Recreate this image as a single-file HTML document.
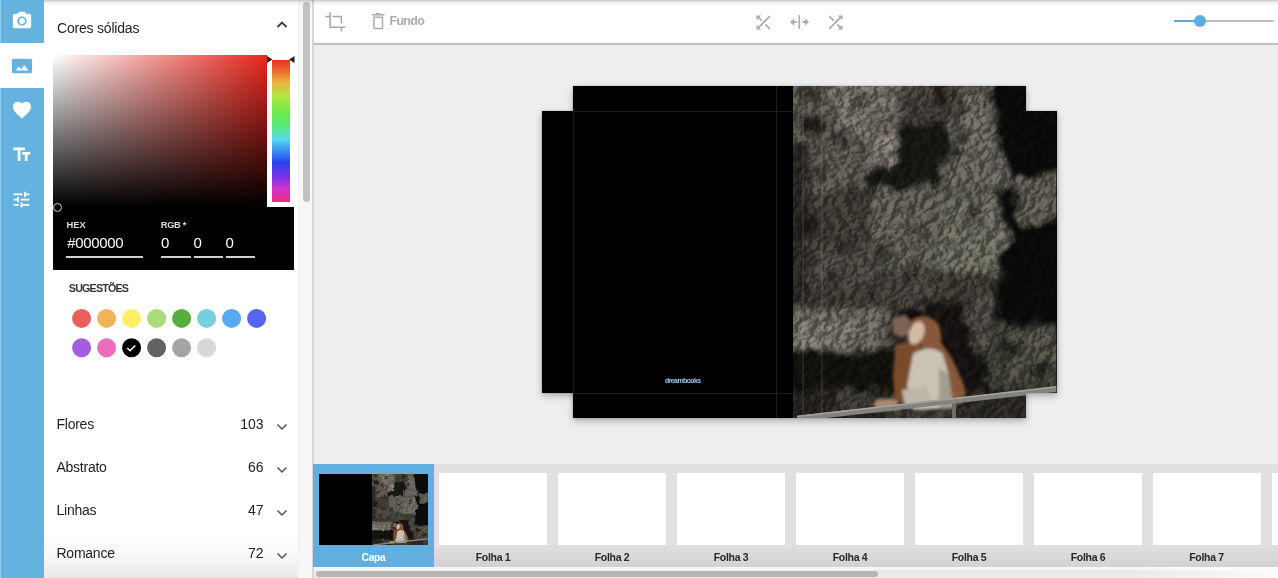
<!DOCTYPE html>
<html><head><meta charset="utf-8">
<style>
*{margin:0;padding:0;box-sizing:border-box}
html,body{width:1278px;height:578px;overflow:hidden;background:#fff;font-family:"Liberation Sans",sans-serif}
.a{position:absolute}
.t{position:absolute;white-space:nowrap;line-height:1}
svg{display:block}
</style></head><body>
<!-- SIDEBAR -->
<div class="a" style="left:0;top:0;width:44px;height:578px;background:#66b2de"></div>
<div class="a" style="left:0;top:0;width:1px;height:578px;background:#8ccdf1"></div>
<div class="a" style="left:0;top:43px;width:44px;height:45px;background:#fff"></div>
<svg class="a" style="left:10.6px;top:10.2px" width="22" height="22" viewBox="0 0 24 24"><path fill="#fff" d="M9 2L7.17 4H4c-1.1 0-2 .9-2 2v12c0 1.1.9 2 2 2h16c1.1 0 2-.9 2-2V6c0-1.1-.9-2-2-2h-3.17L15 2H9zm3 15c-2.76 0-5-2.24-5-5s2.24-5 5-5 5 2.24 5 5-2.24 5-5 5z"/><circle cx="12" cy="12" r="3.2" fill="#fff"/></svg>
<svg class="a" style="left:11.1px;top:55px" width="22" height="22" viewBox="0 0 24 24"><path fill="#66b2de" d="M23 18V6c0-1.1-.9-2-2-2H3c-1.1 0-2 .9-2 2v12c0 1.1.9 2 2 2h18c1.1 0 2-.9 2-2zM8.5 12.5l2.5 3.01L14.5 11l4.5 6H5l3.5-4.5z"/></svg>
<svg class="a" style="left:10.6px;top:99.3px" width="22" height="22" viewBox="0 0 24 24"><path fill="#fff" d="M12 21.35l-1.45-1.32C5.4 15.36 2 12.28 2 8.5 2 5.42 4.42 3 7.5 3c1.74 0 3.41.81 4.5 2.09C13.09 3.81 14.76 3 16.5 3 19.58 3 22 5.42 22 8.5c0 3.780-3.4 6.86-8.55 11.54L12 21.35z"/></svg>
<svg class="a" style="left:10.8px;top:144px" width="21.5" height="21.5" viewBox="0 0 24 24"><path fill="#fff" d="M2.5 4v3h5v12h3V7h5V4h-13zm19 5h-9v3h3v7h3v-7h3V9z"/></svg>
<svg class="a" style="left:11px;top:188.5px" width="21" height="21" viewBox="0 0 24 24"><path fill="#fff" d="M3 17v2h6v-2H3zM3 5v2h10V5H3zm10 16v-2h8v-2h-8v-2h-2v6h2zM7 9v2H3v2h4v2h2V9H7zm14 4v-2H11v2h10zm-6-4h2V7h4V5h-4V3h-2v6z"/></svg>

<!-- PANEL -->
<div class="t" style="left:57px;top:21px;font-size:14px;letter-spacing:-0.2px;color:#222">Cores sólidas</div>
<svg class="a" style="left:276px;top:18px" width="12" height="12" viewBox="0 0 12 12"><path d="M1.5 9L6 4.5 10.5 9" fill="none" stroke="#3a3a3a" stroke-width="1.9"/></svg>

<div class="a" style="left:53px;top:55px;width:241px;height:215px;background:#000"></div>
<div class="a" style="left:53px;top:55px;width:214px;height:152px;background:linear-gradient(to top,#000,rgba(0,0,0,0)),linear-gradient(to right,#fff,#e8261c)"></div>
<div class="a" style="left:267px;top:55px;width:27px;height:152px;background:#fff"></div>
<div class="a" style="left:272px;top:60px;width:17.5px;height:142px;background:linear-gradient(to bottom,#e6302a 0%,#ee6a2a 8%,#e8b840 16%,#b0e844 26%,#66ea4c 38%,#5ae88c 48%,#56d8ee 56%,#3a8ef0 64%,#2a44f0 72%,#7432e6 82%,#cc34d2 90%,#ee2c78 100%)"></div>
<svg class="a" style="left:266px;top:55px" width="30" height="10" viewBox="0 0 30 10"><path d="M1 1l5.5 3.5L1 8z" fill="#222"/><path d="M28.5 1L23 4.5 28.5 8z" fill="#222"/></svg>
<div class="a" style="left:52.5px;top:202.5px;width:9px;height:9px;border:1.5px solid #ccc;border-radius:50%"></div>
<div class="t" style="left:66.5px;top:221px;font-size:9.3px;font-weight:bold;color:#ddd">HEX</div>
<div class="t" style="left:67.3px;top:235px;font-size:15px;letter-spacing:-0.35px;color:#fff">#000000</div>
<div class="a" style="left:66.2px;top:256px;width:77.3px;height:1.6px;background:#d0d0d0"></div>
<div class="t" style="left:160.8px;top:221px;font-size:9.3px;font-weight:bold;letter-spacing:-0.35px;color:#ddd">RGB *</div>
<div class="t" style="left:161px;top:235px;font-size:15px;color:#fff">0</div>
<div class="t" style="left:193.5px;top:235px;font-size:15px;color:#fff">0</div>
<div class="t" style="left:225.5px;top:235px;font-size:15px;color:#fff">0</div>
<div class="a" style="left:161px;top:256px;width:29.5px;height:1.6px;background:#d0d0d0"></div>
<div class="a" style="left:193.5px;top:256px;width:29px;height:1.6px;background:#d0d0d0"></div>
<div class="a" style="left:225.5px;top:256px;width:29px;height:1.6px;background:#d0d0d0"></div>

<div class="t" style="left:68.8px;top:283px;font-size:10.7px;font-weight:bold;letter-spacing:-0.8px;color:#333">SUGESTÕES</div>
<svg class="a" style="left:60px;top:300px" width="210" height="70">
<g>
<circle cx="21.6" cy="18.4" r="9.5" fill="#e8605c"/>
<circle cx="46.6" cy="18.4" r="9.5" fill="#f0b356"/>
<circle cx="71.6" cy="18.4" r="9.5" fill="#fdf068"/>
<circle cx="96.6" cy="18.4" r="9.5" fill="#a8dc78"/>
<circle cx="121.6" cy="18.4" r="9.5" fill="#58ad3e"/>
<circle cx="146.6" cy="18.4" r="9.5" fill="#74cfe0"/>
<circle cx="171.6" cy="18.4" r="9.5" fill="#54a9f0"/>
<circle cx="196.6" cy="18.4" r="9.5" fill="#5565ef"/>
<circle cx="21.6" cy="47.8" r="9.5" fill="#a35ee0"/>
<circle cx="46.6" cy="47.8" r="9.5" fill="#ea6cbb"/>
<circle cx="71.6" cy="47.8" r="9.5" fill="#000"/>
<circle cx="96.6" cy="47.8" r="9.5" fill="#626262"/>
<circle cx="121.6" cy="47.8" r="9.5" fill="#a4a4a4"/>
<circle cx="146.6" cy="47.8" r="9.5" fill="#d8d8d8"/>
<path d="M67.3 48l2.8 2.8 5.2-5.4" fill="none" stroke="#fff" stroke-width="1.5"/>
</g></svg>

<div class="t" style="left:56.5px;top:417px;font-size:14px;letter-spacing:-0.25px;color:#222">Flores</div>
<div class="t" style="left:56.5px;top:460px;font-size:14px;letter-spacing:-0.25px;color:#222">Abstrato</div>
<div class="t" style="left:56.5px;top:503px;font-size:14px;letter-spacing:-0.25px;color:#222">Linhas</div>
<div class="t" style="left:56.5px;top:546px;font-size:14px;letter-spacing:-0.25px;color:#222">Romance</div>
<div class="t" style="left:200px;width:63.5px;text-align:right;top:417px;font-size:14px;color:#222">103</div>
<div class="t" style="left:200px;width:63.5px;text-align:right;top:460px;font-size:14px;color:#222">66</div>
<div class="t" style="left:200px;width:63.5px;text-align:right;top:503px;font-size:14px;color:#222">47</div>
<div class="t" style="left:200px;width:63.5px;text-align:right;top:546px;font-size:14px;color:#222">72</div>
<svg class="a" style="left:276px;top:420px" width="12" height="140" viewBox="0 0 12 140"><g fill="none" stroke="#555" stroke-width="1.5"><path d="M1.5 4.5L6 9 10.5 4.5"/><path d="M1.5 47.5L6 52 10.5 47.5"/><path d="M1.5 90.5L6 95 10.5 90.5"/><path d="M1.5 133.5L6 138 10.5 133.5"/></g></svg>

<div class="a" style="left:44px;top:530px;width:254px;height:48px;background:linear-gradient(rgba(0,0,0,0),rgba(0,0,0,.025) 50%,rgba(0,0,0,.09))"></div>
<!-- panel scrollbar -->
<div class="a" style="left:298px;top:0;width:15px;height:578px;background:#f7f7f7;border-left:1px solid #f0f0f0"></div>
<div class="a" style="left:302.5px;top:2px;width:7px;height:199.5px;background:#c2c2c2;border-radius:3.5px"></div>
<div class="a" style="left:312px;top:0;width:2px;height:578px;background:#d6d6d6"></div>

<!-- MAIN -->
<div class="a" style="left:314px;top:0;width:964px;height:43px;background:#fff"></div>
<div class="a" style="left:314px;top:43px;width:964px;height:2px;background:#bdbdbd"></div>
<div class="a" style="left:314px;top:45px;width:964px;height:419px;background:#eeeeee"></div>
<div class="a" style="left:44px;top:0;width:1234px;height:7px;background:linear-gradient(rgba(0,0,0,.23) 0px,rgba(0,0,0,.11) 1.5px,rgba(0,0,0,.05) 3px,rgba(0,0,0,.015) 5px,rgba(0,0,0,0) 7px)"></div>

<svg class="a" style="left:320px;top:8px" width="30" height="28" viewBox="320 8 30 28"><g fill="none" stroke="#a4a4a4" stroke-width="1.5"><path d="M325.4 16.4H330.1M330.1 12.1V27.2H345.3M332.7 16.4H341.4V23.4M341.4 27.2V31.6"/></g></svg>
<svg class="a" style="left:368px;top:8px" width="20" height="26" viewBox="368 8 20 26"><g fill="none" stroke="#acacac" stroke-width="1.5"><path d="M372 14.8H384.4"/><path d="M376 13.6H380.5"/><path d="M373.9 17.2V27.7Q373.9 28.6 374.8 28.6H381.6Q382.5 28.6 382.5 27.7V17.2z"/></g></svg>
<div class="t" style="left:389.5px;top:14.5px;font-size:12.5px;font-weight:bold;letter-spacing:-0.7px;color:#acacac">Fundo</div>

<svg class="a" style="left:753px;top:11.5px" width="21" height="21" viewBox="0 0 24 24"><path fill="#acacac" transform="rotate(180 12 12)" d="M10.59 9.17L5.41 4 4 5.41l5.17 5.17 1.42-1.41zM14.5 4l2.04 2.04L4 18.59 5.41 20 17.96 7.46 20 9.5V4h-5.5zm.33 9.41l-1.41 1.41 3.13 3.13L14.5 20H20v-5.5l-2.04 2.04-3.13-3.13z"/></svg>
<svg class="a" style="left:789px;top:14px" width="21" height="16" viewBox="0 0 21 16"><g fill="#acacac"><rect x="9.5" y="1" width="1.6" height="14"/><path d="M1 8l4-3.8v2.8h2.6v2H5v2.8z"/><path d="M20 8l-4-3.8v2.8h-2.6v2H16v2.8z"/></g></svg>
<svg class="a" style="left:824.5px;top:11.5px" width="21" height="21" viewBox="0 0 24 24"><path fill="#acacac" d="M10.59 9.17L5.41 4 4 5.41l5.17 5.17 1.42-1.41zM14.5 4l2.04 2.04L4 18.59 5.41 20 17.96 7.46 20 9.5V4h-5.5zm.33 9.41l-1.41 1.41 3.13 3.13L14.5 20H20v-5.5l-2.04 2.04-3.13-3.13z"/></svg>

<div class="a" style="left:1174px;top:20px;width:100px;height:2.2px;background:#bdbdbd;border-radius:1px"></div>
<div class="a" style="left:1174px;top:20px;width:26px;height:2.2px;background:#5aa9da;border-radius:1px"></div>
<div class="a" style="left:1193.8px;top:15.1px;width:12px;height:12px;background:#5aaee2;border-radius:50%"></div>

<!-- SPREAD -->
<div class="a" style="left:542px;top:111px;width:514.5px;height:282px;background:#000;box-shadow:0 3px 7px rgba(0,0,0,.28),0 0 2px rgba(0,0,0,.2)"></div>
<div class="a" style="left:572.5px;top:86px;width:453.5px;height:332px;background:#000;box-shadow:0 3px 7px rgba(0,0,0,.28),0 0 2px rgba(0,0,0,.2)"></div>
<div class="a" style="left:542px;top:111px;width:514.5px;height:282px;background:#000"></div>
<svg class="a" style="left:793px;top:86px" width="264" height="332" viewBox="0 0 264 332">
<defs>
<clipPath id="spc"><rect x="0" y="25" width="263.5" height="282"/><rect x="0" y="0" width="233" height="332"/></clipPath>
<filter id="rock" x="0" y="0" width="100%" height="100%"><feTurbulence type="turbulence" baseFrequency="0.075 0.09" numOctaves="4" seed="11" result="n"/><feDiffuseLighting in="n" surfaceScale="6" lighting-color="#fff" result="l"><feDistantLight azimuth="225" elevation="35"/></feDiffuseLighting><feColorMatrix in="n" values="1 0 0 0 0  1 0 0 0 0  1 0 0 0 0  0 0 0 0 1" result="g"/><feComponentTransfer in="g" result="g2"><feFuncR type="table" tableValues="0.05 0.6 0.95 1 1"/><feFuncG type="table" tableValues="0.05 0.6 0.95 1 1"/><feFuncB type="table" tableValues="0.05 0.6 0.95 1 1"/></feComponentTransfer><feComposite in="l" in2="g2" operator="arithmetic" k1="1.2" k2="0" k3="0" k4="0"/><feColorMatrix type="saturate" values="0"/><feComponentTransfer><feFuncR type="linear" slope="0.85" intercept="0.27"/><feFuncG type="linear" slope="0.85" intercept="0.27"/><feFuncB type="linear" slope="0.85" intercept="0.27"/></feComponentTransfer></filter>
<filter id="b2"><feGaussianBlur stdDeviation="1.5"/></filter>
<filter id="b6" x="-10%" y="-10%" width="120%" height="120%"><feTurbulence type="fractalNoise" baseFrequency="0.05" numOctaves="3" seed="5" result="dn"/><feGaussianBlur in="SourceGraphic" stdDeviation="3" result="bl"/><feDisplacementMap in="bl" in2="dn" scale="18" xChannelSelector="R" yChannelSelector="G"/></filter>
<g id="ph">
<g filter="url(#b6)">
<path d="M-10 -10H274V170H-10z" fill="#6c685d"/>
<path d="M-10 166H274V342H-10z" fill="#49463e"/>
<path d="M40 -10H106L104 30 70 50 40 40z" fill="#88847a"/>
<path d="M72 50L106 46 108 86 76 88z" fill="#948e83"/>
<path d="M86 106L134 104 136 136 90 136z" fill="#878174"/>
<path d="M143 10L190 6 188 63 145 63z" fill="#7d7a6f"/>
<path d="M190 40L214 40 216 120 196 166 150 170 150 110z" fill="#78766c"/>
<path d="M6 32L32 30 34 47 8 48z" fill="#28231d"/>
<path d="M-10 55H17V340H-10z" fill="#34302a"/>
<path d="M17 109L72 105 80 168 17 168z" fill="#4d4940"/>
<path d="M112 0L172 0 170 38 112 40z" fill="#4f4b43"/>
<path d="M106 40L150 36 162 60 150 82 144 112 75 115 72 86 104 78z" fill="#1f1b16"/>
<path d="M136 -10H160L156 20 140 22z" fill="#302c25"/>
<path d="M198 -10H274V92L250 92 226 124 206 60z" fill="#0c0a08"/>
<path d="M204 100L226 94 230 140 274 128 274 252 204 252 200 170z" fill="#0f0c0a"/>
<path d="M219 92L274 86V128L230 142z" fill="#6e6b60"/>
<path d="M176 184L205 184 205 252 176 252z" fill="#2c2923"/>
<path d="M80 104L200 100 216 150 205 186 80 186z" fill="#706e64"/>
<path d="M150 120L200 110 212 160 200 186 140 186z" fill="#7d7b6e"/>
<path d="M20 166H90L88 200 20 202z" fill="#59554d"/>
<path d="M80 112H150L148 155 80 158z" fill="#726e64"/>
<path d="M95 186H140L142 215 95 215z" fill="#555149"/>
<path d="M150 186H200L200 215 150 215z" fill="#49463d"/>
<path d="M-10 223H95L92 268 -10 268z" fill="#7b776c"/>
<path d="M5 240L60 238 60 265 5 265z" fill="#908b81"/>
<path d="M-10 264H106V310H-10z" fill="#151311"/>
<path d="M128 215H205L205 310 128 310z" fill="#1a1714"/>
<path d="M175 213L201 211 203 261 178 262z" fill="#5e5c52"/>
<path d="M195 240H274V302H195z" fill="#4d4d43"/>
<path d="M215 250L264 240 264 290 220 296z" fill="#5e5d51"/>
<path d="M-10 304H92V342H-10z" fill="#2e2b25"/>
<path d="M40 304L86 302 86 322 44 324z" fill="#4b483f"/>
<path d="M161 306H240V342H161z" fill="#35322c"/>
<path d="M40 50L56 48 54 64 42 66z" fill="#403c34"/>
<path d="M20 80L36 78 34 94 22 95z" fill="#454038"/>
<path d="M56 98L72 100 68 116 54 112z" fill="#403c34"/>
<path d="M4 130L26 128 24 150 6 150z" fill="#28231d"/>
<path d="M44 150L62 148 60 170 46 170z" fill="#454038"/>
<path d="M84 160L102 158 100 176 86 176z" fill="#403c34"/>
<path d="M28 190L46 188 44 206 30 206z" fill="#454038"/>
<path d="M70 198L88 198 86 216 72 216z" fill="#403c34"/>
<path d="M110 178L126 178 124 196 112 196z" fill="#454038"/>
<path d="M120 138L136 138 134 150 122 150z" fill="#454038"/>
<path d="M160 40L176 38 174 56 162 56z" fill="#454038"/>
<path d="M60 10L76 8 74 24 62 24z" fill="#454038"/>
<path d="M10 0L30 0 28 14 12 14z" fill="#454038"/>
<path d="M176 120L190 118 188 140 178 140z" fill="#454038"/>
<path d="M208 258L230 256 228 270 210 270z" fill="#2c2923"/>
<path d="M238 278L260 276 258 290 240 290z" fill="#2c2923"/>
</g>
<g style="mix-blend-mode:multiply"><g transform="rotate(-30 132 166)"><rect x="-120" y="-100" width="520" height="540" filter="url(#rock)"/></g></g>
<g filter="url(#b2)">

<path d="M103 259L127 256 130 300 124 316 102 316 100 290z" fill="#7a4c2c"/>
<path d="M139 249C150 256 160 272 166 288 172 300 174 308 170 312L150 312 140 290z" fill="#86583a"/>
<ellipse cx="118" cy="230" rx="13" ry="7" fill="#16110d"/>
<path d="M100 233L112 229 117 235 116 247 109 251 100 247z" fill="#7e6454"/>
<path d="M98 244C102 250 108 253 113 250L112 256C106 258 99 254 97 248z" fill="#2e221a"/>
<path d="M116 238C122 229 138 228 145 238 149 246 149 258 145 268L130 270C128 258 126 246 116 238z" fill="#87593b"/>
<ellipse cx="123.5" cy="247" rx="7.5" ry="12" transform="rotate(20 123.5 247)" fill="#d2baa6"/>
<path d="M120 268C128 262 142 260 150 268L160 292 162 322 120 324 114 300z" fill="#c9c3b5"/>
<path d="M146 282L158 290 161 322 146 322z" fill="#a39d90"/>
<path d="M148 262C156 270 164 286 168 300 171 308 172 314 168 318L160 318 156 290z" fill="#86583a"/>
<path d="M109 304L133 300 140 318 112 322z" fill="#bdb7a9"/>
<path d="M81 316C86 312 98 312 105 315L104 324 82 325z" fill="#a88870"/>
</g>
<path d="M161 316V334" stroke="#6e6c66" stroke-width="4"/>
<path d="M4 332.6L264 303" stroke="#84827c" stroke-width="5.5"/>
<path d="M4 330.4L264 300.8" stroke="#a6a49e" stroke-width="1.5"/>
<path d="M10 0V332M29 0V332" stroke="rgba(150,150,150,.28)" stroke-width="1"/>
</g>
</defs>
<g clip-path="url(#spc)"><use href="#ph"/></g>
</svg>
<!-- guides -->
<div class="a" style="left:573px;top:111px;width:1px;height:282px;background:#1a1a1a"></div>
<div class="a" style="left:572.5px;top:111px;width:220.5px;height:1px;background:#1a1a1a"></div>
<div class="a" style="left:572.5px;top:393px;width:220.5px;height:1px;background:#1a1a1a"></div>
<div class="a" style="left:776px;top:86px;width:1px;height:332px;background:#1e1e1e"></div>
<div class="t" style="left:665px;top:376.5px;font-size:7px;font-weight:bold;letter-spacing:-0.6px;color:#9cc6ea">dreambooks</div>

<!-- THUMB STRIP -->
<div class="a" style="left:314px;top:464px;width:964px;height:103px;background:linear-gradient(#e0e0e0 0,#e0e0e0 80px,#d2d2d2 103px)"></div>
<div class="a" style="left:313px;top:464px;width:121px;height:103px;background:#62afdf"></div>
<div class="a" style="left:318.5px;top:473.5px;width:109.5px;height:71px;background:#000"></div>
<svg class="a" style="left:372px;top:473.5px" width="56" height="71" viewBox="0 0 264 332" preserveAspectRatio="none"><use href="#ph"/></svg>
<div class="t" style="left:313px;width:121px;text-align:center;top:552.5px;font-size:10.3px;font-weight:bold;letter-spacing:-0.35px;color:#fff">Capa</div>

<div class="a" style="left:439px;top:473px;width:108px;height:71.5px;background:#fff"></div>
<div class="a" style="left:558px;top:473px;width:108px;height:71.5px;background:#fff"></div>
<div class="a" style="left:677px;top:473px;width:108px;height:71.5px;background:#fff"></div>
<div class="a" style="left:796px;top:473px;width:108px;height:71.5px;background:#fff"></div>
<div class="a" style="left:915px;top:473px;width:108px;height:71.5px;background:#fff"></div>
<div class="a" style="left:1034px;top:473px;width:108px;height:71.5px;background:#fff"></div>
<div class="a" style="left:1152.5px;top:473px;width:108px;height:71.5px;background:#fff"></div>
<div class="a" style="left:1271.5px;top:473px;width:108px;height:71.5px;background:#fff"></div>
<div class="t" style="left:439px;width:108px;text-align:center;top:551.5px;font-size:10.5px;font-weight:bold;letter-spacing:-0.3px;color:#282828">Folha 1</div>
<div class="t" style="left:558px;width:108px;text-align:center;top:551.5px;font-size:10.5px;font-weight:bold;letter-spacing:-0.3px;color:#282828">Folha 2</div>
<div class="t" style="left:677px;width:108px;text-align:center;top:551.5px;font-size:10.5px;font-weight:bold;letter-spacing:-0.3px;color:#282828">Folha 3</div>
<div class="t" style="left:796px;width:108px;text-align:center;top:551.5px;font-size:10.5px;font-weight:bold;letter-spacing:-0.3px;color:#282828">Folha 4</div>
<div class="t" style="left:915px;width:108px;text-align:center;top:551.5px;font-size:10.5px;font-weight:bold;letter-spacing:-0.3px;color:#282828">Folha 5</div>
<div class="t" style="left:1034px;width:108px;text-align:center;top:551.5px;font-size:10.5px;font-weight:bold;letter-spacing:-0.3px;color:#282828">Folha 6</div>
<div class="t" style="left:1152.5px;width:108px;text-align:center;top:551.5px;font-size:10.5px;font-weight:bold;letter-spacing:-0.3px;color:#282828">Folha 7</div>

<div class="a" style="left:314px;top:567px;width:964px;height:11px;background:linear-gradient(to right,rgba(255,255,255,0) 820px,rgba(255,255,255,.85) 964px),linear-gradient(#f8f8f8 0,#f6f6f6 2px,#e9e9e9 4px,#ebebeb 11px)"></div>
<div class="a" style="left:316px;top:571px;width:562px;height:6px;background:#b5b5b5;border-radius:3px"></div>
</body></html>
